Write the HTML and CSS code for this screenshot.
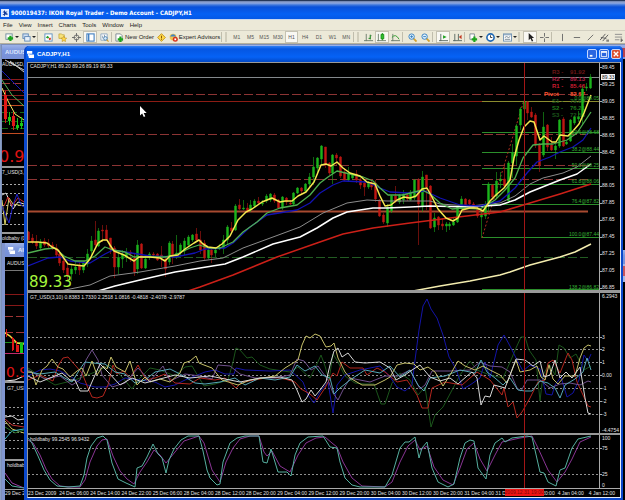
FILE: index.html
```html
<!DOCTYPE html>
<html lang="en">
<head>
<meta charset="utf-8">
<title>IKON Royal Trader</title>
<link rel="stylesheet" href="styles.css">
</head>
<body>
<div class="app">
  <header class="app-title">
    <svg class="app-logo" viewBox="0 0 8 8"><rect width="8" height="8" fill="#dfeaff"/><path d="M4 1 1.500 3.500H3V5H1.500L4 7.200V5.500L6.500 6V4.500L5 4 6.500 2.500 4 2.800Z" fill="#123c9c"/></svg>
    <h1>900019437: IKON Royal Trader - Demo Account - CADJPY,H1</h1>
  </header>
  <nav class="menu">
    <button>File</button><button>View</button><button>Insert</button><button>Charts</button><button>Tools</button><button>Window</button><button>Help</button>
  </nav>
  <div class="toolbar">
    <div class="group new">
      <button aria-label="New chart"><svg viewBox="0 0 10 10"><rect x="1" y="1" width="7" height="6" fill="#fff" stroke="#6d8a9a"/><path d="M6 3v6M3 6h6" stroke="#1ca41c" stroke-width="2.500"/></svg><i class="drop"></i></button>
      <button aria-label="Profiles"><svg viewBox="0 0 10 10"><rect x="1" y="1" width="6" height="5" fill="#cfe0f4" stroke="#5f87b5"/><rect x="3" y="4" width="6" height="5" fill="#e8f1fa" stroke="#5f87b5"/></svg><i class="drop"></i></button>
    </div>
    <span class="sep"></span>
    <div class="group views">
      <button aria-label="Market watch"><svg viewBox="0 0 10 10"><rect x="1" y="1" width="8" height="8" fill="#fff" stroke="#5b8fc0"/><path d="m2 5 2-2 2 2-2 1z" fill="#2ca02c"/><path d="m5 6 2-1 1 2-2 1z" fill="#d43b20"/></svg></button>
      <button aria-label="Navigator"><svg viewBox="0 0 10 10"><path d="M1 1h3l1 1h2v4H1z" fill="#f7e27a" stroke="#b99a2c" stroke-width=".7"/><path d="m6.500 3.500 1 2 2.200.3-1.700 1.500.4 2.200-1.900-1-2 1 .4-2.200-1.600-1.500 2.200-.3z" fill="#ffd84a" stroke="#b98a1c" stroke-width=".6"/></svg></button>
      <button aria-label="Data window"><svg viewBox="0 0 10 10"><circle cx="5" cy="5" r="2.800" fill="none" stroke="#666"/><path d="M5 0v4M5 6v4M0 5h4M6 5h4" stroke="#666"/></svg></button>
      <button class="on" aria-label="Terminal"><svg viewBox="0 0 10 10"><rect x="1" y="1" width="8" height="8" fill="#fff" stroke="#3f7dc0" stroke-width="1.200"/><path d="M3 1v8" stroke="#3f7dc0" stroke-width="1.500"/></svg></button>
      <button aria-label="Strategy tester"><svg viewBox="0 0 10 10"><path d="M1 1h7v7H1z" fill="#fff" stroke="#8ba6c0"/><path d="M3 6V3M5 5V2" stroke="#7f97ad"/><circle cx="6" cy="6" r="2" fill="#d7ebfb" stroke="#4a80b0"/><path d="m7.500 7.500 2 2" stroke="#d2a030" stroke-width="1.300"/></svg></button>
    </div>
    <span class="sep"></span>
    <button class="labelled order"><svg viewBox="0 0 10 10"><path d="M1 1h5l2 2v6H1z" fill="#fff" stroke="#7b8792"/><path d="M6 4v6M3 7h6" stroke="#1ca41c" stroke-width="2.400"/></svg>New Order</button>
    <button class="alert" aria-label="MetaEditor"><svg viewBox="0 0 10 10"><path d="m5 .7 4.300 4.300L5 9.300.7 5z" fill="#ffd84a" stroke="#c29318"/><path d="M5 3v3M5 6.500v1" stroke="#7a4b00"/></svg></button>
    <button class="labelled expert"><svg viewBox="0 0 10 10"><circle cx="4.500" cy="4.500" r="3.800" fill="#f0c350"/><path d="M1 4q3.500-5 7 0z" fill="#3f86c7"/><circle cx="7" cy="7" r="2.800" fill="#d6321c"/><path d="M6 6h2v2H6z" fill="#fff"/></svg>Expert Advisors</button>
    <span class="sep"></span><span class="grip"></span>
    <div class="group frames">
      <button>M1</button><button>M5</button><button>M15</button><button>M30</button><button class="on">H1</button><button>H4</button><button>D1</button><button>W1</button><button>MN</button>
    </div>
    <span class="sep"></span><span class="grip"></span>
    <div class="group kinds">
      <button aria-label="Bar chart"><svg viewBox="0 0 10 10"><path d="M2.500 1v8M0 8.500h10M7 2v5M5.500 6H7M7 3h1.500" stroke="#6a7a6a" fill="none"/><path d="M7 2v5M5 6h2" stroke="#2a9a2a"/></svg></button>
      <button class="on" aria-label="Candlesticks"><svg viewBox="0 0 10 10"><path d="M1.500 1v8M0 8.500h10" stroke="#6a7a6a"/><path d="M6 0v8" stroke="#159015"/><path d="M4.500 1.500h3v5h-3z" fill="#2fc02f" stroke="#159015"/></svg></button>
      <button aria-label="Line chart"><svg viewBox="0 0 10 10"><path d="M2 1v8M0 8.500h10" stroke="#6a7a6a"/><path d="M1 5q4-5 8 2" stroke="#2a9a2a" fill="none"/></svg></button>
    </div>
    <span class="sep"></span>
    <div class="group zoom">
      <button aria-label="Zoom in"><svg viewBox="0 0 10 10"><path d="m6 6 3.500 3.500" stroke="#d2a030" stroke-width="2"/><circle cx="4" cy="4" r="3" fill="#dff0fc" stroke="#2e7cc0"/><path d="M2.500 4h3M4 2.500v3" stroke="#2e7cc0"/></svg></button>
      <button aria-label="Zoom out"><svg viewBox="0 0 10 10"><path d="m6 6 3.500 3.500" stroke="#d2a030" stroke-width="2"/><circle cx="4" cy="4" r="3" fill="#dff0fc" stroke="#2e7cc0"/><path d="M2.500 4h3" stroke="#2e7cc0"/></svg></button>
    </div>
    <span class="sep"></span>
    <div class="group shift">
      <button class="on" aria-label="Auto scroll"><svg viewBox="0 0 10 10"><path d="M2 1v8M0 8.500h10" stroke="#55655f"/><path d="m4.500 2.500 4 2-4 2z" fill="#22a022"/></svg></button>
      <button aria-label="Chart shift"><svg viewBox="0 0 10 10"><path d="M2 1v8M0 8.500h10M6 1v7" stroke="#55655f"/><path d="M9.500 2v5L6.500 4.500z" fill="#c33a22"/></svg></button>
    </div>
    <span class="sep"></span>
    <div class="group tools">
      <button aria-label="Indicators"><svg viewBox="0 0 10 10"><path d="M1 1h5v6H1z" fill="#fff" stroke="#7b8792"/><path d="M6 4v6M3 7h6" stroke="#1ca41c" stroke-width="2.400"/></svg><i class="drop"></i></button>
      <button aria-label="Periods"><svg viewBox="0 0 10 10"><circle cx="5" cy="5" r="4" fill="#fff" stroke="#1f68b4" stroke-width="1.800"/><path d="M5 2.500V5h2" stroke="#333" fill="none"/></svg><i class="drop"></i></button>
      <button aria-label="Templates"><svg viewBox="0 0 10 10"><rect x=".5" y="1" width="9" height="8" fill="#fff" stroke="#6f92b2"/><path d="M1 2h8" stroke="#6f92b2"/><path d="m2 5 2-1 2 1 2-1M2 7h6" stroke="#6e7f8a" fill="none"/></svg><i class="drop"></i></button>
    </div>
    <span class="grip"></span>
    <div class="group pointer">
      <button class="on" aria-label="Cursor"><svg viewBox="0 0 10 10"><path d="M3 0v8l2-2 1.500 3.500L8 9 6.500 5.500H9z" fill="#222"/></svg></button>
      <button aria-label="Crosshair"><svg viewBox="0 0 10 10"><path d="M5 0v4M5 6v4M0 5h4M6 5h4" stroke="#666"/></svg></button>
    </div>
    <span class="sep"></span>
    <div class="group lines">
      <button aria-label="Vertical line"><svg viewBox="0 0 10 10"><path d="M5 1v8" stroke="#666"/></svg></button>
      <button aria-label="Horizontal line"><svg viewBox="0 0 10 10"><path d="M2 5h7" stroke="#666"/></svg></button>
      <button aria-label="Trendline"><svg viewBox="0 0 10 10"><path d="m2 8 6-6" stroke="#666"/></svg></button>
      <button aria-label="Channel"><svg viewBox="0 0 10 10"><path d="m0 8 6-7M3 9l6-7M1 5l6 1" stroke="#555"/><path d="M7 8h3M7 10h3" stroke="#444"/></svg></button>
      <button aria-label="Fibonacci"><svg viewBox="0 0 10 10"><path d="M1 1.500h8M1 4.500h8M1 7.500h5" stroke="#888"/><path d="M8 6v4M8 8h2" stroke="#444"/></svg></button>
    </div>
  </div>

  <main class="workspace">
    <section class="window back upper">
      <div class="bar"><h2>AUDUSD,H1</h2><span class="edge"></span></div>
      <svg class="sliver" viewBox="2 59 22 184">
        <g fill="none">
          <path d="M2 79.500h22M2 90.500h22M2 95.500h22M2 99.500h22" stroke="#8a1c1c"/><path d="M2 83.500h22" stroke="#a03535" stroke-dasharray="8 3"/>
          <path d="M2 105.500h22M2 133.500h22" stroke="#c24c22"/><path d="M2 112.500h22M2 121.500h22M2 128.500h22" stroke="#176a17" stroke-dasharray="6 3"/>
          <path d="M5 60 24 70M10 61 24 72" stroke="#ccc"/><path d="M2 71 24 93" stroke="#1818b8"/><path d="M2 80 12 95 24 106" stroke="#56b556"/><path d="M2 88 8 101 15 114 24 120" stroke="#f7e862"/>
          <path d="M5.500 91v32M13.500 112v18" stroke="#e01818"/><path d="M9.500 112v13M17.500 118v12M21.500 117v12" stroke="#18c818"/>
          <path d="M2 184.500h22M2 193.500h22M2 205.500h22M2 213.500h22M2 224.500h22" stroke="#aaa" stroke-dasharray="2 2"/>
          <path d="M2 195 6 193 9 200 13 209 18 202 24 204" stroke="#ddd"/><path d="M2 200 5 225 9 198 13 204 24 206" stroke="#d6cf65"/><path d="M4 206 8 197 12 206 18 198 24 202" stroke="#d02c2c"/><path d="M2 206 9 223 13 205 17 194 21 205 24 207" stroke="#2020c8"/>
        </g>
        <path d="M4 95h3v24H4zM12 116h3v10h-3z" fill="#e01818"/><path d="M8 117h3v4H8zM16 125h3v3h-3zM20 123h3v3h-3z" fill="#18c818"/>
        <path d="M2 166h22v2H2zM2 232h22v2H2z" fill="#999"/>
        <text class="tiny" x="2" y="66">AUDUSD,H1</text><text class="tiny" x="2" y="174">7_USD(3,10)</text><text class="tiny" x="2" y="240">oldbaby (0</text>
        <text class="low" x="-1" y="162">0.90</text>
      </svg>
    </section>
    <section class="window back lower">
      <div class="bar"><svg class="doc" viewBox="0 0 8 8"><path d="M0 0h6v3H0zM2 4h6v4H2z" fill="#fff"/><path d="M1 3h2v3H1z" fill="#dce6ff"/></svg><h2>AUDUSD,H1</h2></div>
      <svg class="sliver" viewBox="5 258 22 240">
        <g fill="none">
          <path d="M5 271.500h22" stroke="#777"/><path d="M5 295.500h22M5 306.500h22" stroke="#861818"/><path d="M5 317.500h22M5 333.500h22" stroke="#a03535" stroke-dasharray="8 3"/>
          <path d="M5 343.500h22" stroke="#1c8c1c"/><path d="M5 354.500h22" stroke="#c02a6c"/><path d="M5 334 10 337 17 344 24 345" stroke="#f7d83e" stroke-width="1.500"/>
          <path d="M6.500 330v8M12.500 338v14M16.500 342v10" stroke="#e01818"/><path d="M5 382 15 381 24 377" stroke="#eee"/>
          <path d="M5 408.500h22M5 416.500h22M5 424.500h22M5 433.500h22M5 441.500h22M5 449.500h22" stroke="#999" stroke-dasharray="2 2"/>
          <path d="M5 418 12 417 18 421 24 420" stroke="#ddd"/><path d="M5 420 12 426 24 428" stroke="#c03030"/><path d="M5 422 12 430 24 434" stroke="#cdbf58"/><path d="M5 440 12 432 24 430" stroke="#38b5c5"/><path d="M5 428 15 434 24 431" stroke="#256f25"/>
          <path d="M5 474 12 484 24 489" stroke="#9a3ca5"/><path d="M5 480 12 487 24 489" stroke="#55aaa2"/>
        </g>
        <path d="M12 339h2v12h-2zM16 346h3v7h-3z" fill="#e01818"/><path d="M20 344h3v10h-3z" fill="#18c818"/>
        <path d="M5 382h22v2H5zM5 460h22v2H5zM5 490h22v1H5z" fill="#999"/>
        <text class="tiny" x="7" y="266">AUDUSD,H1</text><text class="tiny" x="7" y="391">G7_USD(3,10)</text><text class="tiny" x="7" y="468">holdbaby</text><text class="tiny" x="5" y="496">29 Dec 2009</text>
        <text class="low small" x="6" y="378">0.90</text>
      </svg>
    </section>
    <section class="window back right"><div class="bar"></div><div class="edge"></div></section>

    <section class="window front">
      <div class="bar">
        <svg class="doc" viewBox="0 0 8 8"><path d="M0 0h6v3H0zM2 4h6v4H2z" fill="#fff"/><path d="M1 3h2v3H1z" fill="#dce6ff"/></svg>
        <h2>CADJPY,H1</h2>
        <button class="ctl" aria-label="Minimize"><svg viewBox="0 0 9 9"><path d="M2 6.500h3" stroke="#fff" stroke-width="2"/></svg></button>
        <button class="ctl" aria-label="Maximize"><svg viewBox="0 0 9 9"><path d="M1.500 2.500h6v5h-6z" fill="none" stroke="#fff"/><path d="M1 2h7" stroke="#fff" stroke-width="1.500"/></svg></button>
        <button class="ctl close" aria-label="Close"><svg viewBox="0 0 9 9"><path d="m2 2 5 5M7 2 2 7" stroke="#fff" stroke-width="1.500"/></svg></button>
      </div>
      <div class="charts">
        <svg class="plot" viewBox="28 62 592 228">
          <path d="M28 62.500h592" stroke="#999"/>
          <g fill="none">
            <path d="M28 77.500h572" stroke="#84898c"/>
            <path d="M28 94.500h560M28 134.500h560M28 165.500h560M28 179.500h560" stroke="#8c3434" stroke-dasharray="9 3"/>
            <path d="M28 101.500h454" stroke="#8c1c14"/><path d="M28 211.500h560" stroke="#a84a30" stroke-width="2"/>
            <path d="M28 257.500h560" stroke="#225c22" stroke-dasharray="9 3"/>
            <path d="M482 101.500h118" stroke="#8b8b2e"/>
            <path d="M482 132.500h118M482 152.500h118M482 168.500h118M482 184.500h118M482 204.500h118M482 237.500h118M482 289.500h118" stroke="#2b8f2b"/>
            <path d="M482 238 524 100" stroke="#b03020" stroke-dasharray="2 2"/>
          </g>
          <g class="pivots">
            <g fill="#6d1616"><text x="552" y="74">R3 -</text><text x="570" y="74">91.92</text></g>
            <g fill="#b01c40"><text x="552" y="81">R2 -</text><text x="570" y="81">89.13</text></g>
            <g fill="#c81c30"><text x="552" y="88">R1 -</text><text x="570" y="88">85.46</text></g>
            <g fill="#ff5330"><text x="544" y="96">Pivot</text><text x="570" y="96">82.67</text></g>
            <g fill="#1f5c1f"><text x="552" y="103">S1 -</text><text x="570" y="103">79.00</text></g>
            <g fill="#1f7a1f"><text x="552" y="110">S2 -</text><text x="570" y="110">76.21</text></g>
            <g fill="#1b551b"><text x="552" y="117">S3 -</text><text x="570" y="117">72.54</text></g>
          </g>
          <g id="candles"></g>
          <g class="curve">
            <polyline stroke="#8c8c8c" points="60,291 90,285 110,276 140,272 175,266 200,261 223,258 243,248 273,237 300,227 323,213 347,203 367,200 387,201 410,201 430,201 440,204 470,206 500,203 515,196 530,184 543,178 563,173 577,167 591,156"/>
            <polyline stroke="#fff" stroke-width="1.500" points="98,291 115,286 140,280 175,272 200,268 225,264 243,257 273,244 300,237 317,228 333,218 347,212 373,208 387,208 410,207 430,206 470,207 500,205 515,200 530,192 540,188 560,180 577,174 591,164"/>
            <polyline stroke="#cc2018" stroke-width="1.500" points="188,291 200,287 233,275 277,257 317,243 343,234 373,228 410,223 450,218 500,212 530,203 560,194 591,184"/>
            <polyline stroke="#f3ecae" stroke-width="1.500" points="413,291 440,286 470,281 500,275 510,272 530,265 560,257 575,252 591,244"/>
            <polyline stroke="#1212b4" stroke-width="1.300" points="28,266 48,258 60,257 70,261 90,263 105,254 113,250 125,252 150,256 175,257 195,253 205,249 225,248 233,243 250,227 267,215 297,210 310,203 320,193 333,185 343,181 367,182 380,188 390,192 408,193 425,191 440,198 460,205 480,206 500,201 515,188 527,173 537,162 550,157 560,152 573,147 583,140 591,128"/>
            <polyline stroke="#4fae4f" stroke-width="1.300" points="28,253 45,249 55,248 64,256 75,261 85,261 95,256 105,247 113,250 125,252 134,257 150,257 165,257 175,255 190,248 199,245 209,248 220,248 233,242 243,232 257,222 267,213 280,208 297,205 310,195 320,183 328,177 337,171 350,174 363,177 373,181 380,188 388,195 403,195 422,190 430,194 440,203 452,209 462,208 480,209 495,200 505,190 515,178 523,158 533,145 543,144 553,144 567,140 577,133 591,112"/>
            <polyline stroke="#f6e850" stroke-width="1.500" points="28,242 38,242 47,243 52,247 58,250 68,264 75,265 84,266 90,259 98,243 103,240 107,240 110,245 114,251 124,255 134,261 139,257 150,257 160,258 165,261 170,256 178,255 185,249 194,243 199,240 203,244 208,247 216,248 222,244 230,236 238,220 246,212 252,209 262,202 272,198 280,202 285,201 292,201 298,196 306,192 314,182 321,165 326,164 331,166 337,162 343,168 350,173 360,176 367,182 375,184 380,196 385,206 391,205 397,200 404,197 410,198 416,196 422,189 427,188 432,197 438,209 446,218 453,221 458,218 462,210 470,208 477,208 483,211 490,201 497,194 504,188 510,180 514,158 519,140 524,127 530,121 534,122 540,140 544,136 552,142 556,142 560,135 568,136 573,131 579,124 584,113 591,95"/>
          </g>
          <path d="M524.500 63v227" stroke="#a31616"/>
          <g class="fib">
            <text x="599" y="100">0.0@89.05</text><text x="599" y="134">23.6@88.68</text><text x="599" y="151">38.2@88.44</text><text x="599" y="167">50.0@88.25</text><text x="599" y="183">61.8@88.06</text><text x="599" y="203">76.4@87.82</text><text x="599" y="236">100.0@87.44</text><text x="599" y="289">138.2@86.82</text>
          </g>
          <path d="M599.500 63v227" stroke="#aaa"/>
          <path d="M600 67.500h2M600 84.500h2M600 101.500h2M600 118.500h2M600 135.500h2M600 152.500h2M600 169.500h2M600 186.500h2M600 203.500h2M600 220.500h2M600 237.500h2M600 254.500h2M600 271.500h2M600 288.500h2" stroke="#aaa"/>
          <g class="tiny"><text x="602" y="69">89.45</text><text x="602" y="86">89.25</text><text x="602" y="103">89.05</text><text x="602" y="120">88.85</text><text x="602" y="137">88.65</text><text x="602" y="154">88.45</text><text x="602" y="170">88.25</text><text x="602" y="187">88.05</text><text x="602" y="204">87.85</text><text x="602" y="221">87.65</text><text x="602" y="238">87.45</text><text x="602" y="255">87.25</text><text x="602" y="272">87.05</text><text x="602" y="289">86.85</text></g>
          <path d="M601 74h14v6h-14z" fill="#f4f4f4"/><text class="tiny tag" x="602" y="79">89.33</text>
          <text class="tiny" x="30" y="68">CADJPY,H1 89.20 89.26 89.19 89.33</text>
          <text class="quote" x="29" y="287">89.33</text>
          <path d="M140 106v9.500l2.200-2 1.600 3.500 1.500-.7-1.600-3.400h3z" fill="#fff"/>
        </svg>
        <svg class="plot ruled" viewBox="28 293 592 140">
          <path d="M28 337.500h572M28 349.500h572M28 362.500h572M28 375.500h572M28 388.500h572M28 401.500h572M28 414.500h572" stroke="#8f8f8f" stroke-dasharray="2 2"/>
          <g class="curve">
            <polyline stroke="#1b551b" points="28,368 40,376 55,385 75,380 95,372 110,365 122,377 132,389 138,380 150,368 160,370 175,376 185,367 192,366 198,376 204,386 215,384 228,380 233,362 236,348 240,350 247,358 252,357 260,365 270,369 290,372 298,367 310,378 316,366 321,355 325,366 329,380 333,354 338,362 345,376 355,383 365,384 374,384 381,404 385,404 392,383 400,373 410,380 418,395 425,387 431,427 435,415 443,407 451,392 460,375 470,361 477,370 490,375 503,378 511,360 516,348 521,337 525,337 529,350 536,360 540,401 543,375 549,364 555,375 559,345 564,348 570,358 576,354 584,370 591,366"/>
            <polyline stroke="#1414a8" points="28,376 40,370 50,369 60,371 70,376 80,383 95,387 105,387 115,384 125,378 140,380 155,382 165,387 175,385 185,380 195,376 205,372 215,370 225,374 234,374 236,368 245,370 270,371 290,370 303,382 308,395 314,403 320,392 328,382 333,413 337,385 345,375 360,370 370,368 380,366 390,377 397,387 405,391 412,385 415,360 419,330 423,306 427,299 431,309 437,318 443,335 449,357 456,369 463,389 470,385 480,378 485,362 490,378 498,345 504,335 510,346 517,360 523,371 530,365 540,369 546,394 552,395 555,385 561,377 567,397 573,393 579,380 584,355 588,361 591,354"/>
            <polyline stroke="#b3261e" points="28,380 40,375 53,381 58,366 63,358 68,357 75,365 82,373 88,388 92,397 97,398 103,396 108,385 113,365 117,374 124,371 130,378 138,365 146,380 155,378 165,374 175,383 190,384 200,378 215,380 225,378 236,388 242,382 255,380 270,377 285,379 295,382 301,389 310,394 317,400 325,388 333,373 337,376 342,362 350,368 363,368 367,375 377,368 385,372 397,382 407,380 417,395 422,408 428,408 432,388 445,382 462,385 477,372 490,380 502,395 504,388 508,407 513,402 517,418 522,412 530,398 538,382 545,380 548,363 553,360 560,373 568,353 572,360 577,382 583,395 588,406 591,407"/>
            <polyline stroke="#70508c" points="28,370 45,379 60,376 72,385 80,380 86,360 92,350 98,360 102,375 112,387 125,383 138,368 150,381 163,366 170,381 185,374 200,376 212,379 218,365 230,366 240,374 255,378 275,378 290,375 297,359 304,361 311,370 318,366 328,380 333,393 338,400 343,390 350,378 370,382 385,376 398,376 410,370 420,389 425,385 432,371 450,371 470,370 480,362 490,366 502,367 510,372 517,388 521,391 527,380 540,380 550,388 560,384 570,383 580,385 588,381 591,382"/>
            <polyline stroke="#56a7b5" points="28,372 40,374 55,372 63,377 72,382 80,369 85,362 93,363 105,364 115,372 125,374 135,383 145,380 155,372 170,369 180,374 195,383 205,384 220,382 235,378 245,385 260,378 275,380 290,377 297,365 305,371 315,366 322,375 330,378 334,394 340,388 350,380 365,370 380,373 390,366 400,377 410,370 418,385 424,391 430,378 445,376 460,370 475,373 481,360 487,372 495,378 503,385 510,378 518,390 525,391 532,391 540,381 548,383 555,388 560,398 565,385 575,379 583,372 587,358 591,370"/>
            <polyline stroke="#c5bf68" points="28,372 32,372 36,385 42,370 47,366 52,359 58,367 63,369 70,377 77,371 82,368 86,376 92,361 97,375 103,366 107,369 111,357 116,367 125,372 130,361 137,385 145,377 150,382 160,379 170,382 180,373 184,363 190,361 196,356 199,363 204,365 212,368 222,380 238,385 250,380 262,378 275,376 285,368 298,360 302,345 306,336 310,338 315,334 320,336 326,347 331,346 334,343 338,358 345,372 350,378 362,385 375,385 385,380 390,377 397,365 405,363 414,364 420,370 428,367 435,372 443,386 450,375 458,361 465,366 475,370 483,366 490,370 500,375 507,383 516,360 520,372 530,370 537,366 541,377 545,380 549,365 553,379 558,384 565,376 575,376 580,358 584,348 588,345 591,346"/>
            <polyline stroke="#d6d6d6" points="28,376 40,382 50,378 62,373 70,380 75,380 80,391 88,391 95,375 100,364 108,372 120,385 132,378 145,383 160,379 175,375 190,378 210,376 225,379 240,382 260,378 280,377 292,380 297,390 302,402 306,399 311,390 315,396 320,390 326,382 330,365 334,351 338,348 342,357 348,353 355,362 365,363 380,362 390,368 396,380 405,375 412,370 420,365 430,377 440,381 450,378 458,384 467,376 472,372 477,378 481,405 485,396 490,397 494,385 505,388 510,375 516,359 525,360 533,366 540,361 544,377 550,375 555,360 560,378 566,372 572,378 580,367 585,398 588,413 591,414"/>
          </g>
          <path d="M524.500 293v140" stroke="#a31616"/>
          <path d="M599.500 293v140M600 337.500h2M600 349.500h2M600 362.500h2M600 375.500h2M600 388.500h2M600 401.500h2M600 414.500h2" stroke="#aaa"/>
          <text class="tiny" x="30" y="299">G7_USD(3,10) 0.8383 1.7330 2.2518 1.0816 -0.4818 -2.4078 -2.9787</text>
          <g class="tiny"><text x="602" y="298">6.2943</text><text x="602" y="339">3</text><text x="602" y="351">2</text><text x="602" y="364">1</text><text x="602" y="377">0.00</text><text x="602" y="390">-1</text><text x="602" y="403">-2</text><text x="602" y="416">-3</text><text x="602" y="432">-4.4754</text></g>
        </svg>
        <svg class="plot ruled" viewBox="28 435 592 53">
          <path d="M28 448.500h572M28 474.500h572" stroke="#8f8f8f" stroke-dasharray="2 2"/>
          <g class="curve">
            <polyline stroke="#8a3595" points="28,440 33,443 40,455 46,469 52,479 60,486 70,487 80,487 85,480 90,462 97,446 102,440 107,439 113,456 120,471 127,479 134,484 140,472 147,462 154,450 160,455 166,463 175,452 184,441 199,436 204,443 212,470 220,482 226,462 233,448 240,439 250,436 259,436 264,452 267,456 272,451 280,466 290,472 298,455 306,443 316,438 325,437 332,443 337,447 343,462 352,478 362,486 385,487 392,482 400,462 408,446 415,440 420,450 427,446 434,467 443,480 453,485 460,468 467,449 474,443 480,459 487,471 495,455 502,442 520,438 532,436 538,448 548,470 557,482 565,472 572,459 580,442 591,437"/>
            <polyline stroke="#56b0a0" points="28,438 32,443 38,456 44,470 50,480 57,486 68,487 80,486 84,475 87,458 91,446 97,438 103,436 107,440 112,463 118,479 126,483 135,487 137,468 142,466 147,457 153,444 158,454 162,458 166,473 169,460 174,449 181,440 188,436 199,436 203,451 207,470 210,478 217,485 220,484 223,462 230,443 237,438 245,436 259,436 263,462 267,463 271,449 278,472 287,472 291,476 295,455 300,443 308,437 323,436 330,447 337,448 340,462 345,478 352,485 360,487 385,487 392,475 400,448 405,442 409,442 415,437 419,458 422,448 427,442 432,468 438,482 448,487 454,484 460,458 465,443 470,440 474,441 478,468 486,479 490,455 495,443 502,438 505,442 512,438 527,436 532,437 540,472 544,473 548,482 556,486 560,470 565,468 572,448 578,439 591,436"/>
          </g>
          <path d="M524.500 435v53" stroke="#a31616"/><path d="M599.500 435v53M600 448.500h2M600 474.500h2" stroke="#aaa"/>
          <text class="tiny" x="30" y="441">holdbaby 99.2545 96.9432</text>
          <g class="tiny"><text x="602" y="440">100</text><text x="602" y="450">75</text><text x="602" y="476">25</text><text x="602" y="487">0</text></g>
        </svg>
        <div class="times">
          <span>23 Dec 2009</span><span>24 Dec 06:00</span><span>24 Dec 14:00</span><span>24 Dec 22:00</span><span>25 Dec 06:00</span><span>28 Dec 04:00</span><span>28 Dec 12:00</span><span>28 Dec 20:00</span><span>29 Dec 04:00</span><span>29 Dec 12:00</span><span>29 Dec 20:00</span><span>30 Dec 04:00</span><span>30 Dec 12:00</span><span>30 Dec 20:00</span><span>31 Dec 04:00</span><span>31 D</span><span class="tail">20:00</span><span>4 Jan 04:00</span><span>4 Jan 12:00</span>
          <b class="marker">2009.12.31 19:00</b>
        </div>
      </div>
    </section>
  </main>
</div>
<script src="chart.js"></script>
</body>
</html>
```
FILE: styles.css
```css
* { box-sizing: border-box; }
body {
  margin: 0;
  background: #000;
  font-family: "Liberation Sans", Arial, sans-serif;
  font-size: 6px;
  line-height: 8px;
  color: #222;
}
h1, h2 { margin: 0; font-weight: bold; white-space: nowrap; }
button {
  margin: 0;
  padding: 0;
  border: 1px solid transparent;
  background: none;
  font: inherit;
  color: inherit;
  white-space: nowrap;
}
svg { display: block; }
.app { display: flex; flex-direction: column; min-height: 100vh; }
.app-title {
  display: flex;
  align-items: center;
  gap: 2px;
  height: 20px;
  padding: 5px 1px 0;
  border-top: 1px solid #26385a;
  border-bottom: 1px solid #c9d6ee;
  background: linear-gradient(#6d7fa8 0, #93aae0 2px, #3d76dd 4px, #0a50d8 6px, #0560f4 13px, #0458e6 100%);
  color: #fff;
}
.app-title h1 { font: bold 6px/8px "DejaVu Sans Condensed", "DejaVu Sans", sans-serif; }
.app-logo { width: 8px; height: 8px; }
.menu {
  display: flex;
  gap: 6px;
  height: 10px;
  padding: 0 3px;
  background: #ece9d8;
}
.menu button { border: 0; }
.toolbar {
  display: flex;
  align-items: center;
  height: 14px;
  padding-left: 3px;
  border-top: 1px solid #d2cfc0;
  border-bottom: 1px solid #b5b09c;
  background: #ece9d8;
  overflow: hidden;
}
.toolbar button {
  display: flex;
  flex: 1;
  align-items: center;
  justify-content: center;
  gap: 1px;
  height: 12px;
  min-width: 0;
}
.toolbar button.on { border-color: #c5c2b2; background: #f9f8f3; }
.toolbar svg { flex: none; width: 9px; height: 9px; }
.toolbar .group { display: flex; flex: none; }
.toolbar .labelled, .toolbar .alert { flex: none; }
.drop { border: 2px solid transparent; border-top-color: #222; border-bottom: 0; }
.sep { flex: none; width: 4px; height: 10px; border-left: 1px solid #c0bdac; }
.grip { flex: none; width: 5px; height: 10px; border-left: 2px solid #d0cdbb; }
.new { width: 34px; }
.views { width: 70px; }
.toolbar .order { width: 39px; }
.toolbar .alert { width: 14px; }
.toolbar .expert { width: 53px; }
.frames { width: 123px; font-size: 5px; color: #555; }
.kinds { width: 40px; }
.zoom { width: 26px; }
.shift { width: 28px; }
.tools { width: 50px; }
.pointer { width: 28px; }
.lines { width: 70px; }

.workspace {
  position: relative;
  flex: 1;
  padding: 2px 2px 0 24px;
  border-left: 1px solid #8aa0c8;
  background: #7d8fb8;
  overflow: hidden;
}
.window .bar { display: flex; align-items: center; gap: 3px; color: #fff; }
.window h2 { font-size: 6px; }
.doc { flex: none; width: 7px; height: 7px; }
.back { position: absolute; background: #000; }
.back .bar {
  height: 14px;
  padding: 0 3px;
  background: linear-gradient(#9db2e8, #7b96dd 40%, #7890d6);
}
.back h2 { flex: 1; color: #dfe7fb; }
.sliver { width: 22px; }
.upper { top: 1px; left: 1px; right: 0; bottom: 0; }
.upper .bar { padding-right: 0; }
.upper .edge { width: 10px; height: 9px; background: #b8434c; }
.lower { top: 199px; left: 1px; width: 60px; bottom: 0; border-left: 3px solid #8095cf; }
.right { top: 206px; right: 0; width: 20px; height: 32px; background: #a9b7df; }
.right .edge { height: 10px; margin-top: 2px; background: #c6555c; }
.front {
  position: relative;
  margin-left: -1px;
  border: solid #0a48cc;
  border-width: 0 2px 2px 3px;
  border-radius: 5px 5px 0 0;
  background: #0a48cc;
}
.front .bar {
  height: 16px;
  padding: 0 1px;
  margin: 0 -1px;
  border-radius: 4px 4px 0 0;
  background: linear-gradient(#2f80f4, #0556e2 3px, #0562f6 11px, #0348c4);
}
.front h2 { flex: 1; }
.ctl {
  width: 10px;
  height: 10px;
  margin-left: -1px;
  border: 1px solid #c5d8ff;
  border-radius: 2px;
  background: #2b66e0;
}
.ctl.close { background: #dc4f30; }
.charts {
  border: solid #e6ebf5;
  border-width: 0 1px 1px;
  border-left-color: #999;
  background: #000;
}
.plot { width: 100%; }
.ruled { border-top: 2px solid #999; box-sizing: content-box; }
.plot:first-child + .ruled { border-top-width: 3px; }
.curve { fill: none; stroke-linejoin: round; }
.tiny { font-size: 5px; fill: #e4e4e4; }
.tag { fill: #111; }
.pivots { font-size: 6px; font-weight: bold; }
.fib { font-size: 5px; fill: #35b135; text-anchor: end; }
.quote { font: 15px "DejaVu Sans", sans-serif; fill: #a6f53c; }
.low { font: 16px "DejaVu Sans", sans-serif; fill: #e01414; }
.low.small { font-size: 14px; }
.up { fill: #1fd01f; stroke: #1ba81b; }
.down { fill: #dc1a14; stroke: #b01812; }
.times {
  position: relative;
  display: grid;
  grid-template-columns: repeat(19, 1fr);
  height: 9px;
  border-top: 1px solid #aaa;
  font-size: 5px;
  color: #e4e4e4;
  white-space: nowrap;
}
.tail { padding-right: 3px; text-align: right; }
.marker {
  position: absolute;
  left: 80.5%;
  width: 39px;
  height: 7px;
  line-height: 7px;
  background: #f01414;
  color: #7a0808;
  font-weight: normal;
  text-align: center;
}
```
FILE: chart.js
```js
// Each candle: direction, wick top, body top, body bottom, wick bottom.
const data = `
r 231 232 240 241|r 234 238 242 244|r 235 242 246 249|g 239 243 248 250|r 238 241 245 247|r 239 243 246 248|r 242 245 249 250|r 244 248 255 257|r 250 254 263 266|r 256 261 270 273
r 263 268 275 280|g 264 269 274 281|g 262 267 270 274|r 262 265 270 275|g 261 263 270 273|g 249 254 264 267|g 236 241 251 256|r 221 240 245 248|g 228 231 246 247|r 225 230 231 242
r 225 230 239 241|r 238 238 249 254|r 246 248 267 278|g 252 258 267 274|g 250 254 259 268|g 248 253 256 262|r 250 252 254 262|r 254 258 272 276|g 240 245 269 274|r 243 244 268 269
g 256 259 268 269|g 252 254 257 260|r 252 254 255 258|r 253 254 260 261|r 246 255 256 267|r 257 259 269 277|g 241 243 262 265|r 241 244 256 264|g 235 253 255 259|g 243 245 253 256
g 238 241 251 255|g 235 237 245 246|g 234 235 240 242|r 228 234 240 242|r 231 240 250 254|r 240 243 258 260|g 248 250 258 259|r 249 250 255 263|g 248 250 253 257|g 244 247 249 250
g 235 240 248 254|g 225 227 240 244|r 222 228 231 233|g 204 206 230 231|r 199 205 209 210|g 200 208 209 210|r 203 208 212 213|g 200 205 210 212|g 199 201 206 208|r 197 201 203 205
g 200 203 204 206|g 194 196 201 203|g 193 194 200 202|r 193 195 201 203|r 199 200 208 209|g 196 197 208 210|r 197 198 202 205|r 200 203 204 205|g 192 193 204 205|g 187 188 193 194
r 187 188 191 195|g 183 184 191 192|g 173 177 184 188|g 157 167 177 185|g 157 158 168 175|g 145 146 159 166|r 147 147 165 168|r 162 163 173 175|g 154 155 173 184|r 153 155 158 165
r 156 157 176 178|r 168 172 180 181|g 167 174 180 181|g 173 175 178 180|r 170 174 180 183|r 178 180 185 189|r 181 183 187 196|g 181 183 187 189|r 179 183 187 190|r 180 183 199 202
r 199 200 216 217|r 213 215 222 224|g 204 207 223 227|g 195 196 211 213|r 186 196 201 203|g 194 195 202 204|g 190 194 200 204|r 194 195 199 201|g 190 192 200 201|g 179 180 198 200
r 178 180 204 245|g 171 177 206 212|r 175 175 187 210|r 185 186 228 229|g 213 218 227 232|r 216 217 225 230|r 218 224 226 230|g 222 224 226 232|g 222 224 226 230|g 218 222 225 226
g 206 207 222 223|g 196 199 208 209|r 198 199 205 206|r 199 200 204 206|r 202 204 208 209|r 207 209 216 218|g 212 214 217 238|g 201 204 216 219|g 182 184 204 214|r 184 185 197 200
g 172 181 196 198|g 172 179 181 188|r 166 179 186 188|g 161 163 201 202|g 144 153 163 178|g 124 126 156 165|g 107 109 125 130|g 99 102 109 113|r 101 102 113 120|r 107 112 117 118
r 113 115 145 148|r 143 144 165 172|g 112 127 155 157|r 124 125 147 151|r 137 145 150 151|g 144 146 150 159|g 119 120 146 148|r 117 119 146 147|g 140 142 144 145|g 119 120 141 142
g 116 117 123 125|g 111 117 119 122|g 86 89 117 124|g 83 87 88 91|g 74 77 88 89`;

const svg = "http://www.w3.org/2000/svg";
const layer = document.getElementById("candles");
data.trim().split(/[|\n]/).forEach((row, i) => {
  const [dir, high, top, bottom, low] = row.trim().split(" ");
  const x = Math.round(28.2 + i * 3.9);
  const path = document.createElementNS(svg, "path");
  path.setAttribute("class", dir === "g" ? "up" : "down");
  path.setAttribute("stroke-width", ".6");
  path.setAttribute("d", `M${x + 0.5} ${high}V${low}M${x - 0.4} ${top}h1.8V${bottom}h-1.8Z`);
  layer.append(path);
});
```
